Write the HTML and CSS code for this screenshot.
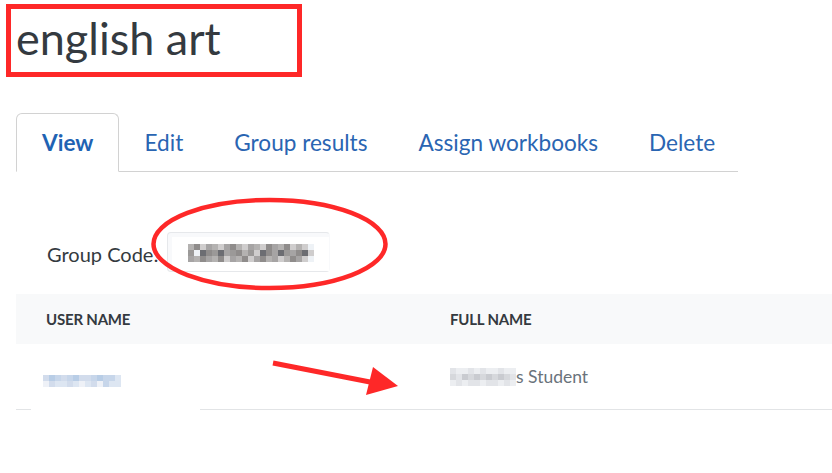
FILE: index.html
```html
<!DOCTYPE html>
<html>
<head>
<meta charset="utf-8">
<link rel="stylesheet" href="styles.css">
</head>
<body>
<div class="page">
  <div class="title-box"><h2 class="title">english art</h2></div>

  <nav class="tabs">
    <a class="tab active">View</a>
    <a class="tab">Edit</a>
    <a class="tab">Group results</a>
    <a class="tab">Assign workbooks</a>
    <a class="tab">Delete</a>
  </nav>

  <div class="code-row">
    <span class="code-label">Group Code:</span>
    <div class="code-input">
      <div class="pix pix-code">
        <i class="g2"></i><i class="g4"></i><i class="g1"></i><i class="g3"></i><i class="g2"></i><i class="g1"></i><i class="g3"></i><i class="g4"></i><i class="g2"></i><i class="g1"></i><i class="g3"></i><i class="g2"></i><i class="g1"></i><i class="g4"></i><i class="g3"></i><i class="g2"></i><i class="g4"></i><i class="g1"></i><i class="g2"></i><i class="g1"></i><i class="g0"></i>
        <i class="g5"></i><i class="g0"></i><i class="g6"></i><i class="g4"></i><i class="g5"></i><i class="g6"></i><i class="g3"></i><i class="g5"></i><i class="g4"></i><i class="g2"></i><i class="g5"></i><i class="g1"></i><i class="g6"></i><i class="g4"></i><i class="g3"></i><i class="g6"></i><i class="g5"></i><i class="g3"></i><i class="g4"></i><i class="g6"></i><i class="g1"></i>
        <i class="g3"></i><i class="g2"></i><i class="g4"></i><i class="g3"></i><i class="g2"></i><i class="g4"></i><i class="g1"></i><i class="g3"></i><i class="g2"></i><i class="g4"></i><i class="g1"></i><i class="g3"></i><i class="g4"></i><i class="g2"></i><i class="g3"></i><i class="g1"></i><i class="g2"></i><i class="g4"></i><i class="g3"></i><i class="g1"></i><i class="g0"></i>
      </div>
    </div>
  </div>

  <table class="members">
    <thead>
      <tr><th class="col-user">User name</th><th>Full name</th></tr>
    </thead>
    <tbody>
      <tr>
        <td class="col-user">
          <div class="pix pix-user">
            <i class="b3"></i><i class="b1"></i><i class="b2"></i><i class="b3"></i><i class="b2"></i><i class="b1"></i><i class="b3"></i><i class="b3"></i><i class="b2"></i><i class="b1"></i><i class="b2"></i><i class="b2"></i><i class="b4"></i>
            <i class="b5"></i><i class="b3"></i><i class="b4"></i><i class="b4"></i><i class="b3"></i><i class="b4"></i><i class="b5"></i><i class="b4"></i><i class="b3"></i><i class="b5"></i><i class="b2"></i><i class="b4"></i><i class="b4"></i>
          </div>
          <span class="blur-patch"></span>
        </td>
        <td><div class="full"><span class="pix pix-name">
            <i class="n1"></i><i class="n0"></i><i class="n0"></i><i class="n1"></i><i class="n0"></i><i class="n1"></i><i class="n0"></i><i class="n0"></i><i class="n1"></i><i class="n0"></i><i class="n0"></i>
            <i class="n2"></i><i class="n1"></i><i class="n3"></i><i class="n2"></i><i class="n3"></i><i class="n2"></i><i class="n3"></i><i class="n2"></i><i class="n3"></i><i class="n2"></i><i class="n1"></i>
            <i class="n0"></i><i class="n1"></i><i class="n0"></i><i class="n1"></i><i class="n1"></i><i class="n0"></i><i class="n1"></i><i class="n1"></i><i class="n0"></i><i class="n1"></i><i class="n0"></i>
          </span><span class="full-text">s Student</span></div></td>
      </tr>
    </tbody>
  </table>
</div>

<svg class="marks" width="832" height="473" viewBox="0 0 832 473">
  <ellipse cx="269.5" cy="244" rx="116" ry="44" fill="none" stroke="#fe2828" stroke-width="4.5"/>
  <line x1="273" y1="363" x2="370" y2="382" stroke="#fe2828" stroke-width="5"/>
  <polygon points="373,367 398,386 366,395" fill="#fe2828"/>
</svg>
</body>
</html>
```

FILE: styles.css
```css
html, body {
  margin: 0;
  padding: 0;
  background: #fff;
  overflow: hidden;
}
body {
  width: 832px;
  height: 473px;
  position: relative;
  font-family: Lato, "Open Sans", "Liberation Sans", sans-serif;
  color: #343a40;
}
.page {
  padding: 4px 0 0 0;
}
.title-box {
  margin-left: 6px;
  width: 286px;
  height: 63px;
  border: 5px solid #fe2828;
  display: flex;
  align-items: center;
}
.title {
  margin: 0 0 0 5px;
  font-size: 45px;
  font-weight: 400;
  line-height: 1;
  color: #343a40;
  position: relative;
  top: -2px;
}

.tabs {
  margin: 36px 0 0 16px;
  width: 722px;
  display: flex;
  border-bottom: 1px solid #d2d2d2;
  height: 58px;
}
.tab {
  display: flex;
  align-items: center;
  flex-shrink: 0;
  white-space: nowrap;
  padding: 0 24.5px 1px;
  font-size: 22.6px;
  color: #2a65b2;
  border: 1px solid transparent;
  border-radius: 6px 6px 0 0;
  margin-bottom: -1px;
  box-sizing: border-box;
  height: 59px;
}
.tab.active {
  font-weight: 700;
  color: #1f63b3;
  border-color: #d2d2d2;
  border-bottom-color: #fff;
  background: #fff;
  padding: 0 24.5px 1px 25px;
}

.code-row {
  display: flex;
  align-items: center;
  margin: 60px 0 0 47px;
  height: 40px;
}
.code-label {
  font-size: 20px;
  color: #343a40;
  margin-right: 9px;
  position: relative;
  top: 2px;
}
.code-input {
  width: 163px;
  height: 40px;
  box-sizing: border-box;
  border: 1px solid #e6e8eb;
  border-right-color: transparent;
  border-radius: 4px;
  background: #f8f9fb;
  display: flex;
  align-items: flex-end;
  padding-left: 4px;
}
.code-input .pix-code {
  background: #fff;
  width: 159px;
  height: 34px;
  box-sizing: border-box;
  padding: 7px 0 0 16px;
}

.pix {
  display: inline-grid;
  grid-auto-rows: 6px;
}
.pix i { display: block; width: 6px; height: 6px; }
.pix-code { grid-template-columns: repeat(21, 6px); align-content: start; }
.pix-user { grid-template-columns: repeat(13, 6px); position: relative; top: -1px; }
.pix-name { grid-template-columns: repeat(11, 6px); }

.g0 { background: #eef2f6; }
.g1 { background: #cfcdcd; }
.g2 { background: #b4b2b1; }
.g3 { background: #a6a4a4; }
.g4 { background: #8f8c8b; }
.g5 { background: #9b9998; }
.g6 { background: #6c6d72; }

.b1 { background: #b8cde6; }
.b2 { background: #c7d6ea; }
.b3 { background: #d2dcec; }
.b4 { background: #dde6f2; }
.b5 { background: #eef1f7; }

.n0 { background: #eceef1; }
.n1 { background: #e2e4e8; }
.n2 { background: #d6d8dc; }
.n3 { background: #c9cbd0; }

.members {
  margin: 22px 0 0 16px;
  border-collapse: collapse;
  width: 830px;
}
.members th {
  background: #f8f9fa;
  text-align: left;
  text-transform: uppercase;
  font-size: 15px;
  font-weight: 700;
  color: #343a40;
  height: 50px;
  padding: 0 0 0 30px;
  letter-spacing: -0.2px;
}
.members td {
  height: 65px;
  padding: 0 0 0 30px;
  border-bottom: 1px solid #e2e4e6;
  font-size: 17.5px;
  color: #6a737b;
  vertical-align: middle;
}
.members .col-user {
  width: 374px;
}
.members td.col-user {
  padding-left: 27px;
  position: relative;
}
.blur-patch {
  position: absolute;
  left: 15px;
  bottom: -2px;
  width: 169px;
  height: 4px;
  background: #fff;
}
.full {
  display: flex;
  align-items: center;
}
.full-text {
  line-height: 20px;
}

.marks {
  position: absolute;
  left: 0;
  top: 0;
  pointer-events: none;
}
```
